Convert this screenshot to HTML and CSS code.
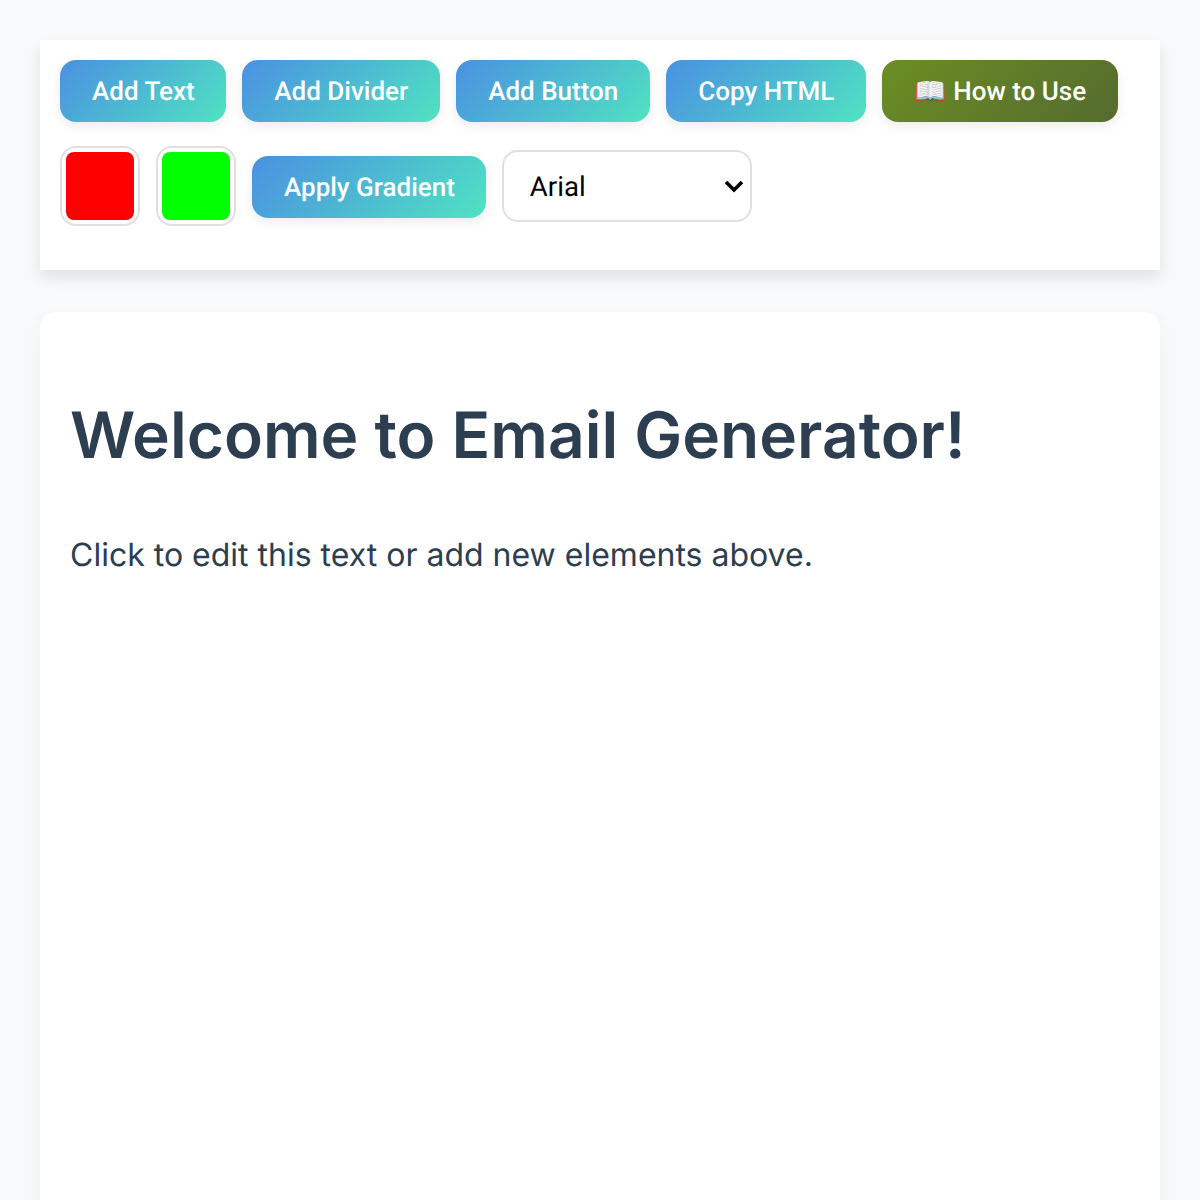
FILE: index.html
```html
<!DOCTYPE html>
<html lang="en">
<head>
<meta charset="utf-8">
<title>Email Generator</title>
<link rel="stylesheet" href="styles.css">
</head>
<body>
<div class="page">
  <div class="toolbar">
    <button class="btn btn-tight">Add Text</button>
    <button class="btn">Add Divider</button>
    <button class="btn">Add Button</button>
    <button class="btn">Copy HTML</button>
    <button class="btn btn-help">📖 How to Use</button>
    <input class="color" type="color" value="#ff0000">
    <input class="color" type="color" value="#00ff00">
    <button class="btn btn-tight btn-apply">Apply Gradient</button>
    <select class="font-select"><option>Arial</option></select>
  </div>
  <div class="canvas">
    <h1 class="title">Welcome to Email Generator!</h1>
    <p class="lead">Click to edit this text or add new elements above.</p>
  </div>
</div>
</body>
</html>
```

FILE: styles.css
```css
* { box-sizing: border-box; }
html, body { margin: 0; height: 100%; }
body {
  background: #f8fafc;
  font-family: Inter, sans-serif;
  overflow: hidden;
  text-rendering: geometricPrecision;
}
.page { padding: 40px; }
.toolbar {
  display: flex;
  flex-wrap: wrap;
  align-items: center;
  gap: 24px 16px;
  height: 230px;
  align-content: flex-start;
  padding: 20px;
  background: #fff;
  box-shadow: 0 8px 16px rgba(0, 0, 0, 0.1);
  margin-bottom: 42px;
}
.btn {
  height: 62px;
  padding: 2px 31.4px 0 32.6px;
  border: 0;
  border-radius: 16px;
  color: #fff;
  font: 500 26px Roboto, sans-serif;
  text-rendering: geometricPrecision;
  background: linear-gradient(135deg, #4a90e2, #50e3c2);
  box-shadow: 0 4px 12px rgba(0, 0, 0, 0.08);
}
.btn-tight { padding-left: 32px; padding-right: 31px; }
.btn-help {
  padding-right: 32px;
  background: linear-gradient(135deg, #6b8e23, #556b2f);
}
.btn-apply { margin-top: 2px; }
.color {
  width: 80px;
  height: 80px;
  padding: 4px;
  border: 2px solid #e0e0e0;
  border-radius: 16px;
  background: #fff;
  -webkit-appearance: none;
  appearance: none;
}
.color::-webkit-color-swatch-wrapper { padding: 0; }
.color::-webkit-color-swatch { border: 0; border-radius: 8px; }
.font-select {
  width: 250px;
  height: 72px;
  padding: 0 40px 0 26px;
  border: 2px solid #e0e0e0;
  border-radius: 16px;
  color: #000;
  font: 400 27.6px Roboto, sans-serif;
  text-rendering: geometricPrecision;
  -webkit-appearance: none;
  appearance: none;
  background: #fff url("data:image/svg+xml,%3Csvg xmlns='http://www.w3.org/2000/svg' width='20' height='14' viewBox='0 0 20 14'%3E%3Cpath d='M2 3l8 8 8-8' fill='none' stroke='%23000' stroke-width='3.6'/%3E%3C/svg%3E") no-repeat right 6px center;
}
.canvas {
  height: 1000px;
  padding: 30px;
  border-radius: 16px;
  background: #fff;
  color: #2c3e50;
  box-shadow: 0 8px 24px rgba(0, 0, 0, 0.05);
}
.title {
  margin: 55px 0 0;
  font-size: 64px;
  font-weight: 600;
  line-height: 77px;
}
.lead {
  margin: 57px 0 0;
  font-size: 32px;
  line-height: 48px;
}
```
